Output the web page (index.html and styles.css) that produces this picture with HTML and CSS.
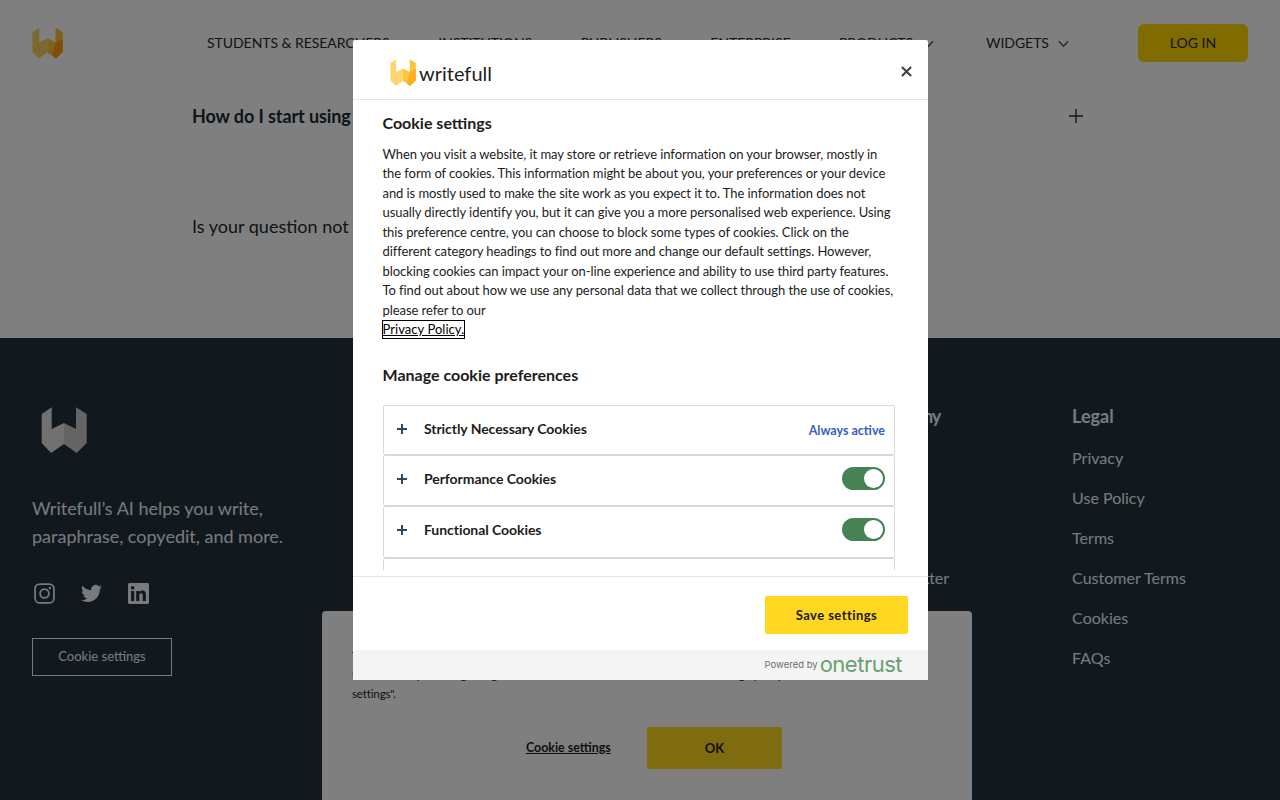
FILE: index.html
```html
<!DOCTYPE html>
<html lang="en">
<head>
  <meta charset="UTF-8">
  <meta name="viewport" content="width=device-width, initial-scale=1.0">
  <title>Writefull</title>
  <link rel="stylesheet" href="styles.css">
</head>
<body>

<header class="topbar">
  <svg class="top-logo" viewBox="0 0 46 46">
    <polygon class="w-left" points="10.7,0.3 0.7,7 0.7,36 10,46 23,37 23,16 10.7,22"/>
    <polygon class="w-right" points="35,0.3 45.7,7 45.7,36 35.7,46 23,37 23,16 35,22"/>
    <polygon class="w-tip" points="35,22 45.7,17 45.7,36 35.7,46 30,42"/>
  </svg>
  <nav class="nav">
    <a>Students &amp; Researchers</a>
    <a>Institutions</a>
    <a>Publishers</a>
    <a>Enterprise</a>
    <a>Products <svg class="chevron" viewBox="0 0 12 8"><polyline points="1,1 6,6.5 11,1"/></svg></a>
    <a class="nav-last">Widgets <svg class="chevron" viewBox="0 0 12 8"><polyline points="1,1 6,6.5 11,1"/></svg></a>
  </nav>
  <a class="login">Log in</a>
</header>

<section class="faq">
  <div class="faq-row">
    <span class="faq-q">How do I start using Writefull?</span>
    <svg class="plus faq-plus" viewBox="0 0 14 14"><path d="M7 0v14M0 7h14"/></svg>
  </div>
  <p class="faq-more">Is your question not listed? Get in touch with us.</p>
</section>

<footer class="footer">
  <div class="foot-brand">
    <svg class="foot-logo" viewBox="0 0 46 46">
      <polygon class="g-left" points="10.7,0.3 0.7,7 0.7,36 10,46 23,37 23,16 10.7,22"/>
      <polygon class="g-right" points="35,0.3 45.7,7 45.7,36 35.7,46 23,37 23,16 35,22"/>
    </svg>
    <p class="tagline">Writefull’s AI helps you write, paraphrase, copyedit, and more.</p>
    <div class="social">
      <svg viewBox="0 0 24 24" class="ig"><rect x="1.2" y="1.2" width="21.6" height="21.6" rx="5.5"/><circle cx="12" cy="12" r="5"/><circle class="ig-dot" cx="18.2" cy="5.8" r="1.4"/></svg>
      <svg viewBox="0 0 24 24" class="solid"><path d="M23.953 4.57a10 10 0 01-2.825.775 4.958 4.958 0 002.163-2.723c-.951.555-2.005.959-3.127 1.184a4.92 4.92 0 00-8.384 4.482C7.69 8.095 4.067 6.13 1.64 3.162a4.822 4.822 0 00-.666 2.475c0 1.71.87 3.213 2.188 4.096a4.904 4.904 0 01-2.228-.616v.06a4.923 4.923 0 003.946 4.827 4.996 4.996 0 01-2.212.085 4.936 4.936 0 004.604 3.417 9.867 9.867 0 01-6.102 2.105c-.39 0-.779-.023-1.17-.067a13.995 13.995 0 007.557 2.209c9.053 0 13.998-7.496 13.998-13.985 0-.21 0-.42-.015-.63A9.935 9.935 0 0024 4.59z"/></svg>
      <svg viewBox="0 0 24 24" class="solid"><path d="M20.447 20.452h-3.554v-5.569c0-1.328-.027-3.037-1.852-3.037-1.853 0-2.136 1.445-2.136 2.939v5.667H9.351V9h3.414v1.561h.046c.477-.9 1.637-1.85 3.37-1.85 3.601 0 4.267 2.37 4.267 5.455v6.286zM5.337 7.433c-1.144 0-2.063-.926-2.063-2.065 0-1.138.92-2.063 2.063-2.063 1.14 0 2.064.925 2.064 2.063 0 1.139-.925 2.065-2.064 2.065zm1.782 13.019H3.555V9h3.564v11.452zM22.225 0H1.771C.792 0 0 .774 0 1.729v20.542C0 23.227.792 24 1.771 24h20.451C23.2 24 24 23.227 24 22.271V1.729C24 .774 23.2 0 22.222 0h.003z"/></svg>
    </div>
    <a class="foot-cookie">Cookie settings</a>
  </div>
  <div class="foot-col foot-company">
    <h4>Company</h4>
    <a>About</a>
    <a>Blog</a>
    <a>Jobs</a>
    <a>Newsletter</a>
  </div>
  <div class="foot-col foot-legal">
    <h4>Legal</h4>
    <a>Privacy</a>
    <a>Use Policy</a>
    <a>Terms</a>
    <a>Customer Terms</a>
    <a>Cookies</a>
    <a>FAQs</a>
  </div>
</footer>

<!-- cookie banner, sits under the dark overlay -->
<div class="banner">
  <p>This website uses cookies to give you the best experience. By continuing to use<br>this website, you are agreeing to the use of cookies. To find out more and manage your preferences, click on "Cookie<br>settings".</p>
  <div class="banner-btns">
    <a class="banner-link">Cookie settings</a>
    <a class="banner-ok">OK</a>
  </div>
</div>

<div class="overlay"></div>

<div class="modal">
  <div class="modal-head">
    <svg class="modal-logo" viewBox="0 0 46 46" preserveAspectRatio="none">
      <polygon class="m-left" points="10.7,0.3 0.7,7 0.7,36 10,46 23,37 23,16 10.7,22"/>
      <polygon class="m-right" points="35,0.3 45.7,7 45.7,36 35.7,46 23,37 23,16 35,22"/>
      <polygon class="m-tip" points="35,22 45.7,17 45.7,36 35.7,46 30,42"/>
    </svg>
    <span class="wordmark">writefull</span>
    <svg class="close" viewBox="0 0 12 12"><path d="M1 1l10 10M11 1L1 11"/></svg>
  </div>

  <div class="modal-scroll">
    <h3 class="first-title">Cookie settings</h3>
    <p class="intro">When you visit a website, it may store or retrieve information on your browser, mostly in the form of cookies. This information might be about you, your preferences or your device and is mostly used to make the site work as you expect it to. The information does not usually directly identify you, but it can give you a more personalised web experience. Using this preference centre, you can choose to block some types of cookies. Click on the different category headings to find out more and change our default settings. However, blocking cookies can impact your on-line experience and ability to use third party features. To find out about how we use any personal data that we collect through the use of cookies, please refer to our<br><a class="policy">Privacy Policy.</a></p>
    <h3 class="manage-title">Manage cookie preferences</h3>

    <div class="accordion">
      <div class="acc-row row-a">
        <svg class="plus" viewBox="0 0 10 10"><path d="M5 0v10M0 5h10"/></svg>
        <span class="acc-name">Strictly Necessary Cookies</span>
        <span class="always">Always active</span>
      </div>
      <div class="acc-row row-b">
        <svg class="plus" viewBox="0 0 10 10"><path d="M5 0v10M0 5h10"/></svg>
        <span class="acc-name">Performance Cookies</span>
        <span class="toggle"></span>
      </div>
      <div class="acc-row row-c">
        <svg class="plus" viewBox="0 0 10 10"><path d="M5 0v10M0 5h10"/></svg>
        <span class="acc-name">Functional Cookies</span>
        <span class="toggle"></span>
      </div>
      <div class="acc-row row-c">
        <svg class="plus" viewBox="0 0 10 10"><path d="M5 0v10M0 5h10"/></svg>
        <span class="acc-name">Targeting Cookies</span>
        <span class="toggle"></span>
      </div>
    </div>
  </div>

  <div class="modal-actions">
    <a class="save">Save settings</a>
  </div>
  <div class="modal-foot">
    <span class="powered">Powered by</span>
    <span class="onetrust">onetrust</span>
  </div>
</div>

</body>
</html>
```

FILE: styles.css
```css
html, body {
  height: 100%;
}
body {
  font-family: "Lato", "Liberation Sans", sans-serif;
  margin: 0;
  height: 800px;
  overflow: hidden;
  background: #fff;
  color: #202a33;
}
a {
  color: inherit;
}
p, h3, h4 {
  margin: 0;
}

/* top bar */
.topbar {
  display: flex;
  align-items: center;
  height: 86px;
  padding: 0 32px;
}
.top-logo {
  width: 31px;
  height: 32px;
  flex: none;
}
.w-left { fill: #f8cf58; }
.w-right { fill: #fbc53e; }
.w-tip { fill: #fb9f10; }
.nav {
  display: flex;
  align-items: center;
  gap: 48.5px;
  margin: -2px 0 0 144px;
  font-size: 14px;
  letter-spacing: -0.05px;
  text-transform: uppercase;
  white-space: nowrap;
}
.nav-last {
  margin-left: 4px;
}
.chevron {
  width: 11px;
  height: 8px;
  margin-left: 6px;
  fill: none;
  stroke: #4a4f55;
  stroke-width: 1.4;
}
.login {
  margin-left: auto;
  width: 110px;
  height: 38px;
  line-height: 38px;
  text-align: center;
  background: #ffd700;
  border-radius: 6px;
  font-size: 14px;
  text-transform: uppercase;
}

/* faq */
.faq {
  height: 252px;
  padding: 0 192px;
  font-size: 18px;
}
.faq-row {
  display: flex;
  align-items: center;
  justify-content: space-between;
  padding: 16px 199px 0 0;
  margin-right: -194px;
  height: 27px;
}
.faq-q {
  font-weight: 700;
  letter-spacing: -0.1px;
}
.faq-more {
  margin-top: 86px;
}
.plus {
  width: 10px;
  height: 10px;
  flex: none;
  margin-top: 2px;
  fill: none;
  stroke: #2c4a5c;
  stroke-width: 2;
}
.faq-plus {
  width: 14px;
  height: 14px;
  margin-top: 0;
  stroke: #2a2f35;
  stroke-width: 1.4;
}

/* footer */
.footer {
  position: relative;
  display: flex;
  height: 462px;
  background: #23333f;
  color: #f2f5f7;
  padding: 0 32px;
}
.foot-brand {
  width: 260px;
  padding-top: 69px;
}
.foot-logo {
  display: block;
  width: 46px;
  height: 46px;
  margin-left: 9px;
}
.g-left { fill: #e2e2e2; }
.g-right { fill: #c8c8c8; }
.tagline {
  margin-top: 41px;
  font-size: 18px;
  line-height: 28px;
}
.social {
  display: flex;
  gap: 26px;
  margin-top: 33px;
  padding-left: 2px;
}
.social svg {
  width: 21px;
  height: 21px;
}
.ig {
  fill: none;
  stroke: #f2f5f7;
  stroke-width: 2;
}
.ig-dot {
  fill: #f2f5f7;
  stroke: none;
}
.solid {
  fill: #f2f5f7;
}
.foot-cookie {
  display: block;
  box-sizing: border-box;
  width: 140px;
  height: 38px;
  line-height: 34px;
  margin-top: 34px;
  border: 1px solid #f2f5f7;
  text-align: center;
  font-size: 13px;
}
.foot-col {
  display: flex;
  flex-direction: column;
  padding-top: 66px;
  font-size: 16px;
}
.foot-col h4 {
  font-size: 18px;
  line-height: 24px;
  margin-bottom: 10px;
}
.foot-col a {
  line-height: 20px;
  margin-top: 10px;
  margin-bottom: 10px;
}
.foot-company {
  margin-left: 580px;
}
.foot-company h4 {
  letter-spacing: -1.1px;
}
.foot-legal {
  margin-left: 123px;
}

/* banner behind overlay */
.banner {
  position: fixed;
  left: 322px;
  top: 611px;
  box-sizing: border-box;
  width: 650px;
  height: 189px;
  padding: 0 30px;
  background: #fff;
  border-radius: 4px 4px 0 0;
  color: #222;
}
.banner p {
  margin-top: 35px;
  font-size: 11.5px;
  line-height: 19px;
  letter-spacing: -0.13px;
  white-space: nowrap;
}
.banner-btns {
  display: flex;
  align-items: center;
  margin-top: 24px;
  padding-left: 174px;
}
.banner-link {
  width: 121px;
  padding-bottom: 2px;
  font-size: 12.4px;
  font-weight: 700;
  text-decoration: underline;
}
.banner-ok {
  width: 135px;
  height: 42px;
  line-height: 42px;
  text-align: center;
  background: #ffd620;
  border-radius: 2px;
  font-size: 13px;
  font-weight: 700;
}

.overlay {
  position: fixed;
  inset: 0;
  background: rgba(0,0,0,0.5);
}

/* preference modal */
.modal {
  position: fixed;
  left: 353px;
  top: 40px;
  width: 575px;
  height: 640px;
  display: flex;
  flex-direction: column;
  background: #fff;
  border-radius: 2px;
  color: #1c1c1c;
}
.modal-head {
  display: flex;
  align-items: center;
  flex: none;
  box-sizing: border-box;
  height: 60px;
  padding: 6px 16px 0 37px;
  border-bottom: 1px solid #e6e6e6;
}
.modal-logo {
  width: 26px;
  height: 27px;
}
.m-left { fill: #fcd76f; }
.m-right { fill: #fcc43f; }
.m-tip { fill: #fbae22; }
.wordmark {
  margin-left: 3px;
  font-size: 20px;
  color: #222;
}
.close {
  margin-left: auto;
  margin-top: -3px;
  width: 11px;
  height: 11px;
  fill: none;
  stroke: #444;
  stroke-width: 2.4;
}
.modal-scroll {
  flex: 1;
  min-height: 0;
  overflow: hidden;
  margin-bottom: 6px;
  padding: 0 33px 0 29.5px;
}
.first-title {
  margin-top: 12px;
  font-size: 16px;
  line-height: 22px;
}
.intro {
  margin-top: 10.5px;
  font-size: 13px;
  line-height: 19.5px;
  letter-spacing: -0.07px;
}
.policy {
  display: inline-block;
  line-height: 17px;
  outline: 1px solid #000;
  text-decoration: underline;
  letter-spacing: 0.05px;
  color: #000;
}
.manage-title {
  margin-top: 24.5px;
  font-size: 16px;
  line-height: 22px;
}
.accordion {
  margin: 19px 0 0 0.5px;
}
.acc-row {
  display: flex;
  align-items: center;
  box-sizing: border-box;
  padding: 0 9px 0 13px;
  border: 1px solid #d8d8d8;
  border-radius: 2px;
}
.row-a { height: 50px; padding-bottom: 4px; }
.row-b { height: 51px; padding-bottom: 5px; }
.row-c { height: 52px; padding-bottom: 6px; }
.acc-name {
  margin-left: 17px;
  font-size: 14px;
  font-weight: 700;
  letter-spacing: -0.06px;
}
.always {
  margin-left: auto;
  padding-top: 4px;
  font-size: 12.5px;
  font-weight: 700;
  color: #3860be;
}
.toggle {
  position: relative;
  margin-left: auto;
  width: 43px;
  height: 23px;
  border-radius: 12px;
  background: #468254;
}
.toggle::after {
  content: "";
  position: absolute;
  right: 2px;
  top: 2px;
  width: 19px;
  height: 19px;
  border-radius: 50%;
  background: #fff;
}
.modal-actions {
  flex: none;
  display: flex;
  justify-content: flex-end;
  align-items: center;
  box-sizing: border-box;
  height: 74px;
  padding: 3px 20px 0 0;
  border-top: 1px solid #e6e6e6;
}
.save {
  width: 143px;
  height: 38px;
  line-height: 38px;
  text-align: center;
  background: #ffd620;
  border-radius: 2px;
  font-size: 13px;
  font-weight: 700;
  letter-spacing: 0.45px;
  color: #1a1a1a;
}
.modal-foot {
  flex: none;
  display: flex;
  align-items: center;
  justify-content: flex-end;
  gap: 2px;
  box-sizing: border-box;
  height: 30px;
  padding: 0 26px 3px 0;
  background: #f4f4f4;
}
.powered {
  margin-top: 2px;
  font-family: "Inter", "Liberation Sans", sans-serif;
  font-size: 9.5px;
  color: #6d6d6d;
}
.onetrust {
  font-family: "Inter", "Liberation Sans", sans-serif;
  font-size: 22px;
  line-height: 20px;
  letter-spacing: -0.5px;
  color: #6aa070;
}
```
